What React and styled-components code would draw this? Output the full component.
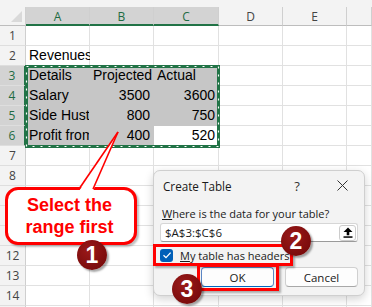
import React from "react";
import styled, { createGlobalStyle } from "styled-components";

const GlobalStyle = createGlobalStyle`
  html, body {
    margin: 0;
    padding: 0;
    background: #ffffff;
    overflow: hidden;
  }
`;

const GREEN = "#217346";
const RED = "#ff0000";

const Page = styled.div`
  position: relative;
  width: 372px;
  height: 307px;
  overflow: hidden;
  font-family: "Liberation Sans", Arial, sans-serif;
`;

const TopStrip = styled.div`
  height: 7px;
  background: #f3f3f3;
`;

const Sheet = styled.div`
  display: grid;
  grid-template-columns: 26px 64px 64px 65px 64px 64px 1fr;
  grid-template-rows: 19px;
  grid-auto-rows: 20px;
`;

const Corner = styled.div`
  position: relative;
  grid-row: 1;
  grid-column: 1;
  background: #f3f3f3;
  border-right: 1px solid #d0d0d0;
  border-bottom: 1px solid #bdbdbd;
  box-sizing: border-box;
  &::after {
    content: "";
    position: absolute;
    right: 3px;
    bottom: 3px;
    width: 0;
    height: 0;
    border-left: 11px solid transparent;
    border-bottom: 11px solid #d9d9d9;
  }
`;

const ColHead = styled.div`
  grid-row: 1;
  grid-column: ${(p) => p.$col};
  display: flex;
  align-items: center;
  justify-content: center;
  box-sizing: border-box;
  font-family: "Open Sans", "Noto Sans", sans-serif;
  font-size: 12px;
  background: ${(p) => (p.$selected ? "#d3d3d3" : "#f3f3f3")};
  color: ${(p) => (p.$selected ? "#1e6b42" : "#444444")};
  border-right: 1px solid #cfcfcf;
  border-bottom: ${(p) => (p.$selected ? `2px solid ${GREEN}` : "1px solid #bdbdbd")};
  padding-top: ${(p) => (p.$selected ? "1px" : "0")};
`;

const RowHead = styled.div`
  grid-row: ${(p) => p.$row};
  grid-column: 1;
  display: flex;
  align-items: center;
  justify-content: center;
  box-sizing: border-box;
  font-family: "Open Sans", "Noto Sans", sans-serif;
  font-size: 12px;
  background: ${(p) => (p.$selected ? "#d3d3d3" : "#f3f3f3")};
  color: ${(p) => (p.$selected ? "#1e6b42" : "#444444")};
  border-right: ${(p) => (p.$selected ? `2px solid ${GREEN}` : "1px solid #cfcfcf")};
  border-bottom: 1px solid #dedede;
`;

const Cell = styled.div`
  grid-row: ${(p) => p.$row};
  grid-column: ${(p) => p.$col};
  display: flex;
  align-items: flex-end;
  justify-content: ${(p) => (p.$num ? "flex-end" : "flex-start")};
  box-sizing: border-box;
  padding: 0 3px 1px 3px;
  font-size: 14px;
  line-height: 17px;
  color: #000000;
  white-space: nowrap;
  overflow: ${(p) => (p.$spill ? "visible" : "hidden")};
  background: ${(p) => (p.$selected ? "#c6c6c6" : "#ffffff")};
  border-right: 1px solid ${(p) => (p.$selected ? "#c6c6c6" : "#e1e1e1")};
  border-bottom: 1px solid ${(p) => (p.$selected ? "#c6c6c6" : "#e1e1e1")};
`;

const SelectionFrame = styled.div`
  grid-column: 2 / 5;
  grid-row: 4 / 8;
  margin: -1px -1px -2px -1px;
  pointer-events: none;
  z-index: 2;
  svg {
    display: block;
    width: 100%;
    height: 100%;
  }
`;

const Bubble = styled.div`
  position: absolute;
  left: 5px;
  top: 187px;
  width: 132px;
  height: 58px;
  box-sizing: border-box;
  border: 3px solid ${RED};
  border-radius: 13px;
  background: #ffffff;
  box-shadow: 2px 2px 2px rgba(0, 0, 0, 0.25);
  display: flex;
  flex-direction: column;
  align-items: center;
  justify-content: center;
  padding-right: 3px;
  color: ${RED};
  font-weight: bold;
  font-size: 18px;
  line-height: 22px;
  z-index: 5;
`;

const Pointer = styled.svg`
  position: absolute;
  left: 0;
  top: 0;
  width: 140px;
  height: 200px;
  z-index: 6;
`;

const Badge = styled.div`
  position: absolute;
  left: ${(p) => p.x - 15}px;
  top: ${(p) => p.y - 15}px;
  width: 30px;
  height: 30px;
  border-radius: 50%;
  background: radial-gradient(circle at 40% 35%, #9a1a1a 0%, #7c0c0c 70%, #6a0707 100%);
  box-shadow: 2px 2px 2px rgba(0, 0, 0, 0.35);
  color: #ffffff;
  font-weight: bold;
  font-size: 23px;
  display: flex;
  align-items: center;
  justify-content: center;
  z-index: 10;
`;

const Dialog = styled.div`
  position: absolute;
  left: 153px;
  top: 170px;
  width: 212px;
  height: 126px;
  box-sizing: border-box;
  background: #f3f3f3;
  border: 1px solid #cfcfcf;
  border-radius: 7px;
  box-shadow: 0 3px 10px rgba(0, 0, 0, 0.18);
  font-family: "Open Sans", "Noto Sans", sans-serif;
  font-size: 11px;
  color: #1a1a1a;
  display: flex;
  flex-direction: column;
  padding: 0 6px 0 6px;
  z-index: 4;
`;

const TitleBar = styled.div`
  display: flex;
  align-items: center;
  height: 29px;
  padding-left: 3px;
  font-size: 11.7px;
`;

const Title = styled.div`
  flex: 1;
`;

const TitleButton = styled.div`
  width: 32px;
  margin-right: ${(p) => p.$gap || 0}px;
  display: flex;
  justify-content: center;
  align-items: center;
  color: #333333;
  font-size: 13px;
`;

const Label = styled.div`
  padding-left: 2px;
  margin-top: 6px;
  line-height: 15px;
  white-space: nowrap;
  u {
    text-decoration: underline;
  }
`;

const InputRow = styled.div`
  display: flex;
  align-items: center;
  box-sizing: border-box;
  height: 19px;
  margin-top: 2px;
  background: #ffffff;
  border: 1px solid #d6d6d6;
  border-bottom-color: #9a9a9a;
  border-radius: 3px;
  padding: 0 1px 0 4px;
`;

const InputText = styled.div`
  flex: 1;
  font-size: 11.5px;
`;

const PickButton = styled.div`
  width: 17px;
  height: 16px;
  box-sizing: border-box;
  border: 1px solid #cccccc;
  border-radius: 3px;
  background: #fdfdfd;
  display: flex;
  align-items: center;
  justify-content: center;
`;

const CheckRow = styled.div`
  display: flex;
  align-items: center;
  gap: 7px;
  margin-top: 5px;
  height: 16px;
  white-space: nowrap;
  u {
    text-decoration: underline;
  }
`;

const Box = styled.div`
  width: 13px;
  height: 13px;
  border-radius: 3px;
  background: #005fb8;
  display: flex;
  align-items: center;
  justify-content: center;
`;

const ButtonRow = styled.div`
  display: flex;
  gap: 11px;
  margin-top: 4px;
  padding-left: 41px;
`;

const Button = styled.div`
  width: 73px;
  height: 20px;
  box-sizing: border-box;
  background: #fdfdfd;
  border: 1px solid ${(p) => (p.$primary ? "#5b86c4" : "#d0d0d0")};
  border-bottom-color: ${(p) => (p.$primary ? "#0067c0" : "#a8a8a8")};
  border-radius: 4px;
  display: flex;
  align-items: center;
  justify-content: center;
  font-size: 11.5px;
`;

const Highlight = styled.div`
  position: absolute;
  left: ${(p) => p.x}px;
  top: ${(p) => p.y}px;
  width: ${(p) => p.w}px;
  height: ${(p) => p.h}px;
  box-sizing: border-box;
  border: 3px solid ${RED};
  box-shadow: 2px 2px 2px rgba(0, 0, 0, 0.3);
  z-index: 8;
`;

const columns = ["A", "B", "C", "D", "E", ""];
const data = {
  2: ["Revenues"],
  3: ["Details", "Projected", "Actual"],
  4: ["Salary", 3500, 3600],
  5: ["Side Hustle", 800, 750],
  6: ["Profit from Side", 400, 520],
};

const isSelected = (r, c) => r >= 3 && r <= 6 && c <= 2 && !(r === 6 && c === 2);

const App = () => {
  const rows = Array.from({ length: 15 }, (_, i) => i + 1);
  return (
    <Page>
      <GlobalStyle />
      <TopStrip />
      <Sheet>
        <Corner />
        {columns.map((c, i) => (
          <ColHead key={c + i} $col={i + 2} $selected={i < 3}>
            {c}
          </ColHead>
        ))}
        {rows.map((r) => (
          <React.Fragment key={r}>
            <RowHead $row={r + 1} $selected={r >= 3 && r <= 6}>
              {r}
            </RowHead>
            {columns.map((_, c) => {
              const v = data[r] ? data[r][c] : undefined;
              return (
                <Cell
                  key={c}
                  $row={r + 1}
                  $col={c + 2}
                  $num={typeof v === "number"}
                  $spill={r === 2}
                  $selected={isSelected(r, c)}
                >
                  {v}
                </Cell>
              );
            })}
          </React.Fragment>
        ))}
        <SelectionFrame>
          <svg preserveAspectRatio="none" viewBox="0 0 195 83">
            <rect x="1.5" y="1.5" width="192" height="80" fill="none" stroke={GREEN} strokeWidth="3" />
            <rect
              x="1.5"
              y="1.5"
              width="192"
              height="80"
              fill="none"
              stroke="#ffffff"
              strokeWidth="1.2"
              strokeDasharray="2 6"
            />
          </svg>
        </SelectionFrame>
      </Sheet>

      <Bubble>
        <span>Select the</span>
        <span>range first</span>
      </Bubble>
      <Pointer viewBox="0 0 140 200">
        <polygon points="79,191 118,132 93,191" fill="#ffffff" />
        <line x1="79" y1="189" x2="118" y2="132" stroke={RED} strokeWidth="1.6" />
        <line x1="93" y1="189" x2="118" y2="132" stroke={RED} strokeWidth="1.6" />
      </Pointer>

      <Dialog>
        <TitleBar>
          <Title>Create Table</Title>
          <TitleButton $gap={13}>?</TitleButton>
          <TitleButton>
            <svg width="11" height="11" viewBox="0 0 11 11">
              <path d="M0.5 0.5 L10.5 10.5 M10.5 0.5 L0.5 10.5" stroke="#333" strokeWidth="1" />
            </svg>
          </TitleButton>
        </TitleBar>
        <Label>
          <u>W</u>here is the data for your table?
        </Label>
        <InputRow>
          <InputText>$A$3:$C$6</InputText>
          <PickButton>
            <svg width="10" height="11" viewBox="0 0 10 11">
              <path d="M5 0.5 L9.5 5 L6.3 5 L6.3 8.2 L3.7 8.2 L3.7 5 L0.5 5 Z" fill="#000" />
              <rect x="0.5" y="9.3" width="9" height="1.5" fill="#000" />
            </svg>
          </PickButton>
        </InputRow>
        <CheckRow>
          <Box>
            <svg width="10" height="10" viewBox="0 0 10 10">
              <path d="M1.5 5.2 L4 7.6 L8.6 2.6" fill="none" stroke="#fff" strokeWidth="1.3" />
            </svg>
          </Box>
          <span>
            <u>M</u>y table has headers
          </span>
        </CheckRow>
        <ButtonRow>
          <Button $primary>OK</Button>
          <Button>Cancel</Button>
        </ButtonRow>
      </Dialog>

      <Highlight x={153} y={244} w={140} h={22} />
      <Highlight x={197} y={264} w={82} h={27} />

      <Badge x={92} y={255}>1</Badge>
      <Badge x={296} y={241}>2</Badge>
      <Badge x={187} y={289}>3</Badge>
    </Page>
  );
};

export default App;
